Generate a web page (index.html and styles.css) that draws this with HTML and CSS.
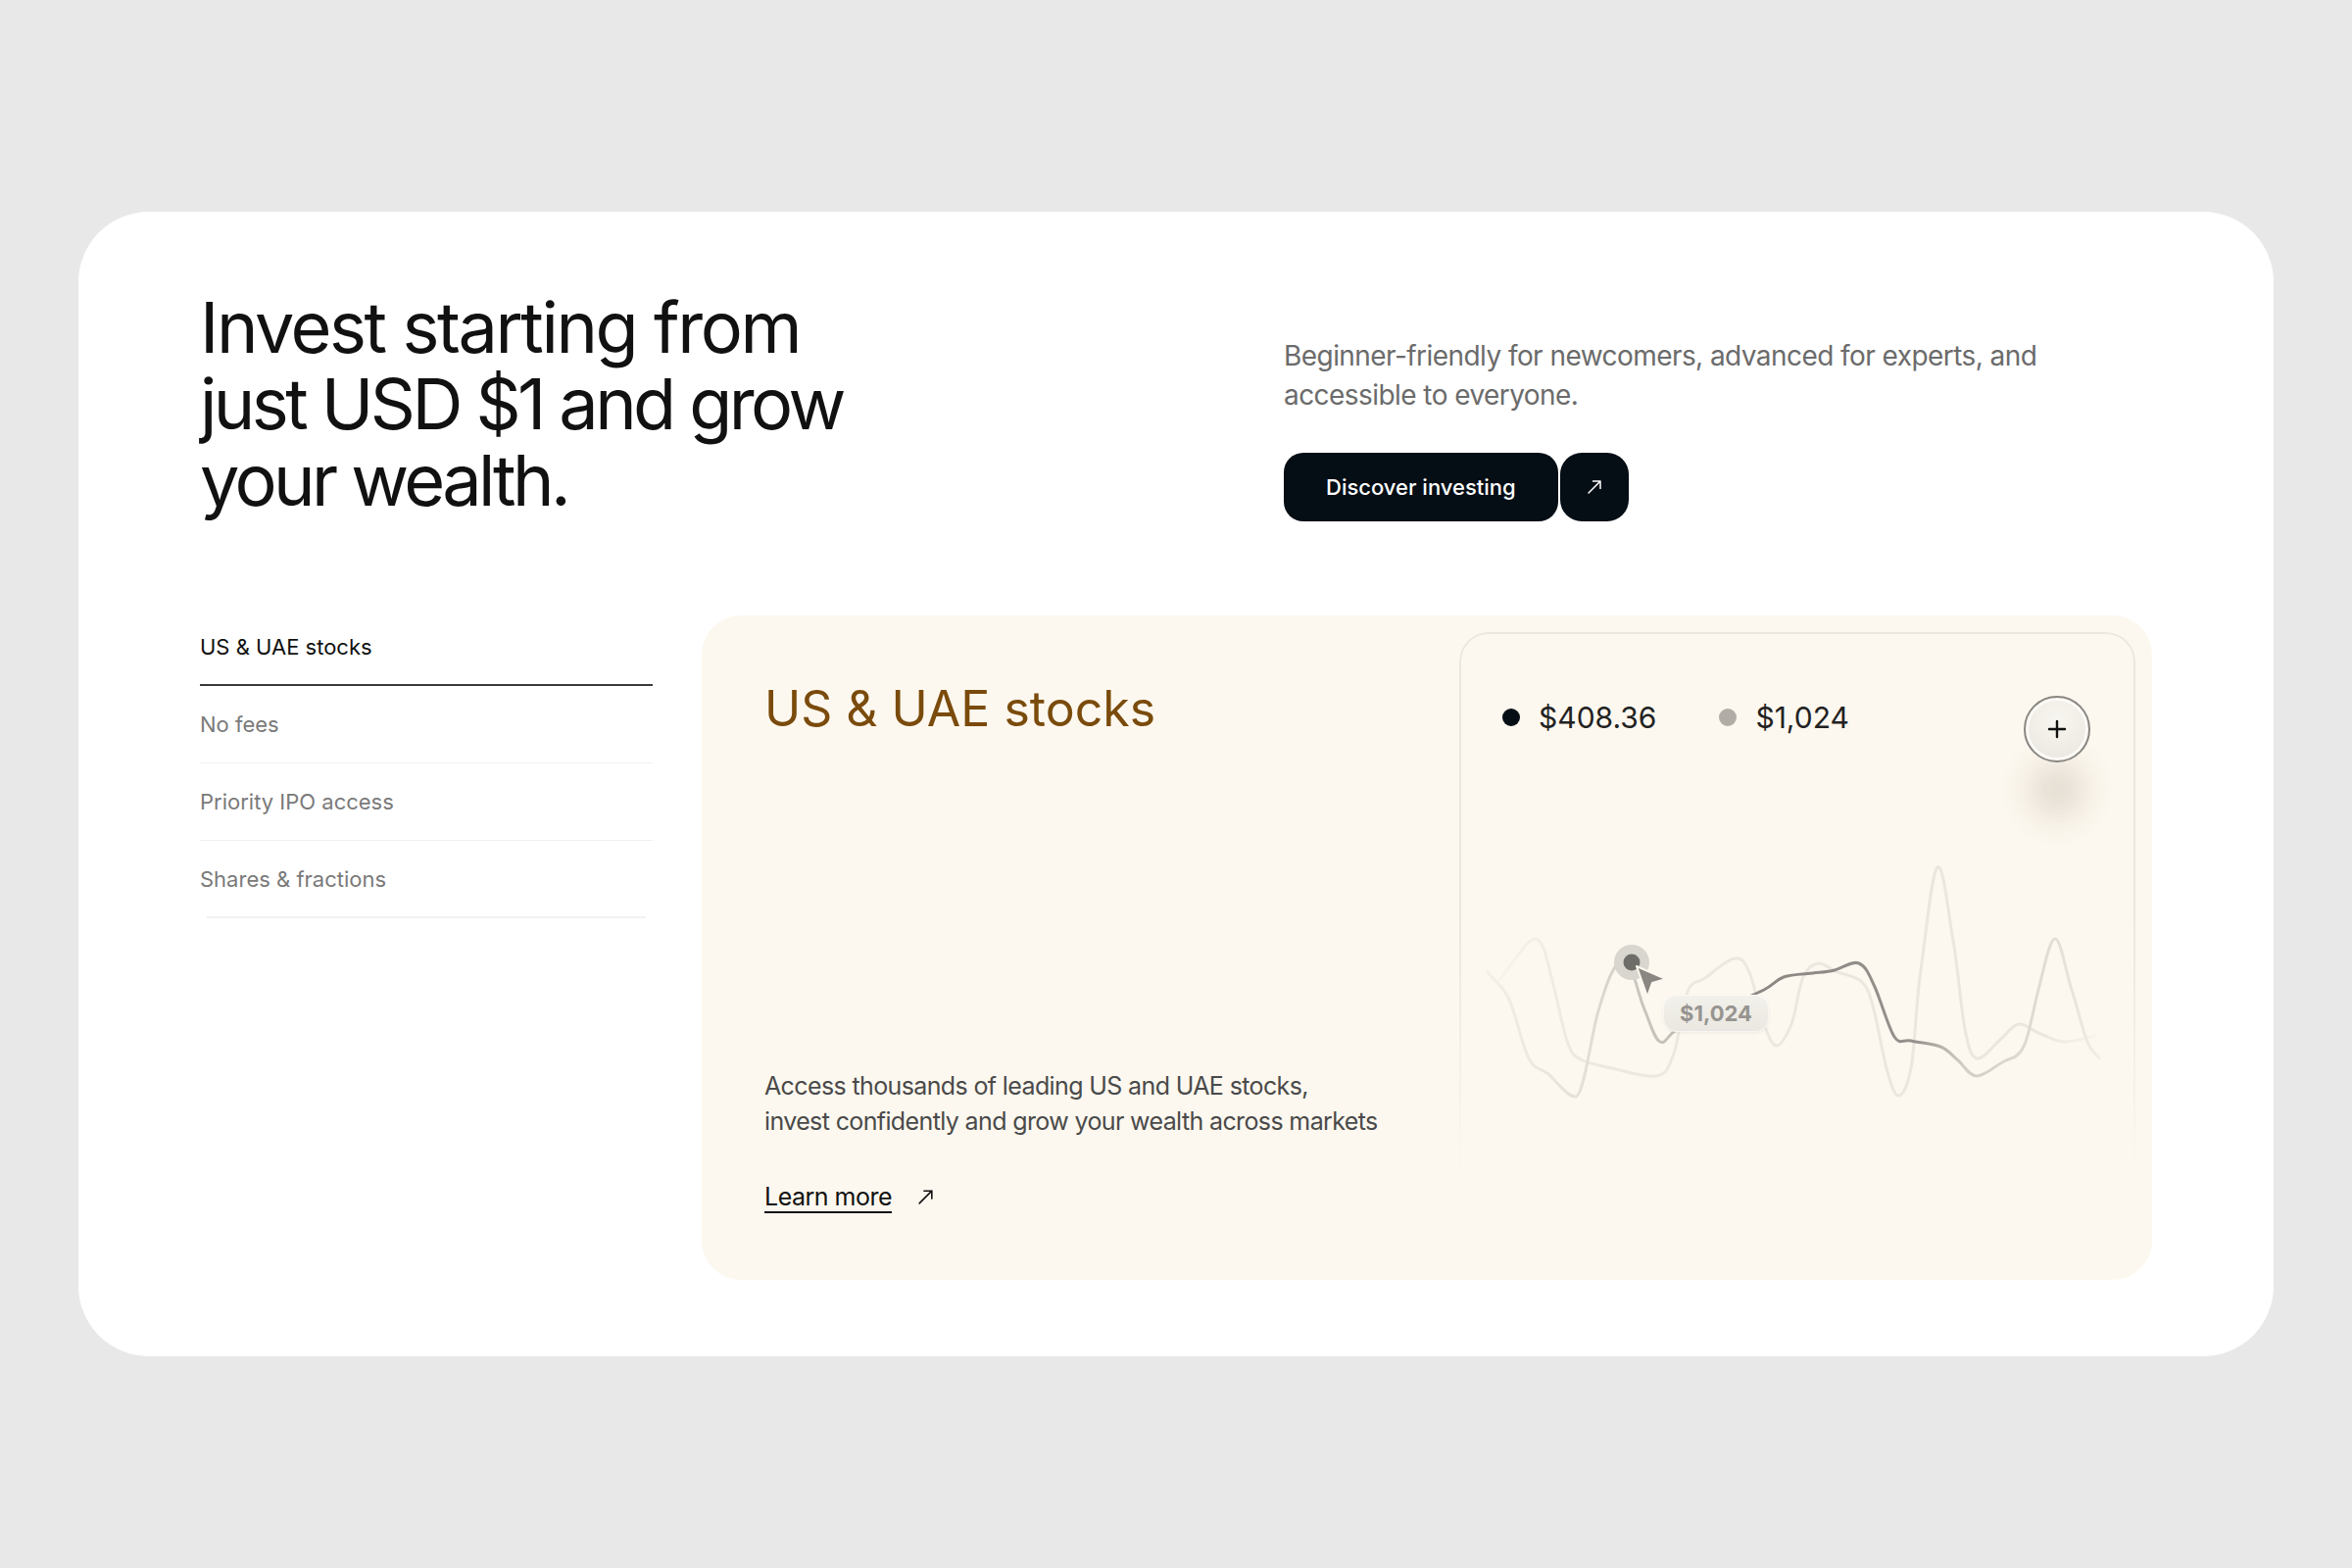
FILE: index.html
```html
<!DOCTYPE html>
<html lang="en">
<head>
<meta charset="utf-8">
<title>Invest</title>
<link rel="stylesheet" href="styles.css">
</head>
<body>
<main class="card">
  <section class="hero">
    <h1 class="hero-title"><span class="hero-line-wide">Invest starting from</span><br>just USD $1 and grow<br>your wealth.</h1>
    <div class="hero-side">
      <p class="hero-text">Beginner-friendly for newcomers, advanced for experts, and accessible to everyone.</p>
      <div class="cta">
        <a class="btn" href="#">Discover investing</a>
        <a class="btn-icon" href="#" aria-label="Open">
          <svg width="18" height="18" viewBox="0 0 18 18" fill="none" stroke="#fff" stroke-width="1.5" stroke-linecap="round" stroke-linejoin="round"><path d="M3 15 L15 3 M7.5 3 H15 V10.5"/></svg>
        </a>
      </div>
    </div>
  </section>

  <section class="features">
    <ul class="tabs">
      <li class="tab tab-active">US &amp; UAE stocks</li>
      <li class="tab">No fees</li>
      <li class="tab">Priority IPO access</li>
      <li class="tab tab-last">Shares &amp; fractions</li>
    </ul>

    <div class="panel">
      <div class="panel-text">
        <h2 class="panel-title">US &amp; UAE stocks</h2>
        <div class="panel-bottom">
          <p class="panel-desc">Access thousands of leading US and UAE stocks,<br>invest confidently and grow your wealth across markets</p>
          <a class="learn" href="#"><span class="learn-label">Learn more</span>
            <svg width="19" height="19" viewBox="0 0 18 18" fill="none" stroke="#111" stroke-width="1.5" stroke-linecap="round" stroke-linejoin="round"><path d="M3 15 L15 3 M7.5 3 H15 V10.5"/></svg>
          </a>
        </div>
      </div>

      <div class="chart-card">
        <div class="chart-head">
          <div class="legend">
            <div class="legend-item"><span class="dot dot-dark"></span>$408.36</div>
            <div class="legend-item"><span class="dot dot-light"></span>$1,024</div>
          </div>
          <button class="plus" type="button" aria-label="Add">
            <svg width="20" height="20" viewBox="0 0 20 20" fill="none" stroke="#111" stroke-width="2.4" stroke-linecap="round"><path d="M10 2 V18 M2 10 H18"/></svg>
          </button>
        </div>
        <svg class="chart" width="690" height="645" viewBox="1489 645 690 645">
          <defs>
            <linearGradient id="g1" gradientUnits="userSpaceOnUse" x1="1518" y1="0" x2="2142" y2="0">
              <stop offset="0" stop-color="#f4efe6"/>
              <stop offset="0.16" stop-color="#e4e0d8"/>
              <stop offset="0.24" stop-color="#cac7c0"/>
              <stop offset="0.30" stop-color="#c3c0ba"/>
              <stop offset="0.45" stop-color="#8b8884"/>
              <stop offset="0.70" stop-color="#95928d"/>
              <stop offset="0.78" stop-color="#d3cfc8"/>
              <stop offset="0.93" stop-color="#e3ded6"/>
              <stop offset="1" stop-color="#f2ede4"/>
            </linearGradient>
            <linearGradient id="g2" gradientUnits="userSpaceOnUse" x1="1530" y1="0" x2="2138" y2="0">
              <stop offset="0" stop-color="#f9f4eb"/>
              <stop offset="0.12" stop-color="#eee9e0"/>
              <stop offset="0.9" stop-color="#ebe6dd"/>
              <stop offset="1" stop-color="#f8f3ea"/>
            </linearGradient>
          </defs>
          <path fill="none" stroke="url(#g2)" stroke-width="3" stroke-linecap="round"
            d="M1530 1000 C1542 986 1558 957 1567 958 S1580 987 1585 1005 S1595 1052 1600 1065 S1607 1078 1615 1082 S1632 1087 1645 1090 S1679 1100 1690 1098 S1703 1089 1708 1075 S1717 1025 1722 1012 S1732 1004 1740 998 S1762 979 1770 978 S1780 981 1785 992 S1795 1032 1800 1045 S1808 1067 1813 1067 S1823 1057 1828 1045 S1835 1007 1840 997 S1849 984 1855 983 S1867 989 1875 992 S1894 996 1900 1002 S1908 1015 1912 1030 S1921 1075 1925 1090 S1933 1118 1937 1118 S1946 1111 1950 1090 S1955 1024 1960 990 S1971 890 1977 885 S1988 932 1993 960 S2001 1030 2005 1050 S2011 1078 2017 1080 S2033 1068 2040 1062 S2053 1046 2060 1045 S2072 1051 2080 1054 S2095 1062 2105 1063 S2127 1059 2138 1057"/>
          <path fill="none" stroke="url(#g1)" stroke-width="3" stroke-linecap="round"
            d="M1518 992 C1525 1001 1533 1005 1540 1020 S1553 1067 1560 1080 S1572 1089 1580 1096 S1600 1120 1608 1119 S1624 1056 1630 1035 S1640 1001 1645 992 S1654 974 1660 980 S1672 1016 1678 1030 S1688 1060 1694 1063 S1701 1056 1712 1050 S1745 1035 1760 1028 S1790 1015 1800 1010 S1812 1000 1820 997 S1841 994 1850 993 S1864 992 1872 990 S1890 980 1897 983 S1907 994 1913 1007 S1927 1049 1933 1058 S1942 1060 1950 1062 S1972 1065 1980 1068 S1992 1077 1998 1082 S2009 1098 2017 1098 S2037 1087 2045 1083 S2059 1080 2065 1068 S2075 1028 2080 1010 S2091 958 2097 958 S2108 992 2114 1010 S2125 1051 2130 1063 S2138 1074 2142 1080"/>
          <circle cx="1665" cy="982" r="18" fill="#d9d6cf"/>
          <circle cx="1665" cy="982" r="8.5" fill="#6e6d6a"/>
          <polygon points="1670,986 1700,999 1686,1003 1681,1017" fill="#8a8783" stroke="#fdf8ef" stroke-width="2" stroke-linejoin="round"/>
        </svg>
        <div class="tooltip">$1,024</div>
      </div>
    </div>
  </section>
</main>
</body>
</html>
```

FILE: styles.css
```css
* {
  box-sizing: border-box;
}

html,
body {
  margin: 0;
}

body {
  background: #e8e8e8;
  font-family: Inter, "Noto Sans", "Liberation Sans", sans-serif;
  color: #111;
}

.card {
  margin: 216px 80px 0;
  background: #fff;
  border-radius: 72px;
  padding: 79px 124px 78px;
}

/* hero */
.hero {
  display: grid;
  grid-template-columns: 1106px 1fr;
}

.hero-title {
  margin: 0;
  font-size: 72px;
  line-height: 78px;
  font-weight: 400;
  letter-spacing: -0.05em;
  color: #111;
}

.hero-line-wide {
  letter-spacing: -0.034em;
}

.hero-side {
  margin-top: 48px;
}

.hero-text {
  margin: 0;
  max-width: 780px;
  font-size: 28px;
  line-height: 40px;
  letter-spacing: -0.02em;
  color: #6b6b6b;
}

.cta {
  display: flex;
  gap: 2px;
  margin-top: 39px;
}

.btn {
  display: flex;
  align-items: center;
  height: 70px;
  padding: 0 43px;
  border-radius: 20px;
  background: #050d15;
  color: #fff;
  font-size: 22px;
  font-weight: 500;
  text-decoration: none;
}

.btn-icon {
  display: flex;
  align-items: center;
  justify-content: center;
  width: 70px;
  height: 70px;
  border-radius: 22px;
  background: #050d15;
}

/* features */
.features {
  display: grid;
  grid-template-columns: 462px 1fr;
  gap: 50px;
  margin-top: 89px;
}

.tabs {
  list-style: none;
  margin: 0;
  padding: 0;
}

.tab {
  height: 79px;
  display: flex;
  align-items: center;
  font-size: 22px;
  color: #7a7a7a;
  border-bottom: 1px solid #f1f1f1;
}

.tab-active {
  color: #111;
  border-bottom: 2px solid #3a3a3a;
}

.tab-last {
  border-bottom: 2px solid transparent;
  border-image: linear-gradient(to right, transparent 8px, #f2f2f2 8px, #f2f2f2 calc(100% - 8px), transparent calc(100% - 8px)) 1;
}

.panel {
  margin-top: 7px;
  height: 678px;
  background: #fdf8ef;
  border-radius: 40px;
  display: grid;
  grid-template-columns: 1fr 690px;
  padding-right: 17px;
}

.panel-text {
  display: flex;
  flex-direction: column;
  padding: 65px 64px 69px;
}

.panel-title {
  margin: 0;
  font-size: 50px;
  line-height: 60px;
  font-weight: 400;
  color: #7a4b0c;
}

.panel-bottom {
  margin-top: auto;
}

.panel-desc {
  margin: 0;
  font-size: 25px;
  line-height: 36px;
  letter-spacing: -0.025em;
  color: #4a4a4a;
}

.learn {
  display: inline-flex;
  align-items: center;
  gap: 25px;
  margin-top: 43px;
  font-size: 25px;
  line-height: 32px;
  letter-spacing: -0.02em;
  color: #111;
  text-decoration: none;
}

.learn-label {
  text-decoration: underline;
  text-decoration-thickness: 2px;
  text-underline-offset: 6px;
}

/* chart card */
.chart-card {
  position: relative;
  margin: 17px 0 16px;
  border-radius: 30px;
}

.chart-card::before {
  content: "";
  position: absolute;
  inset: 0;
  border: 2px solid #ece6dc;
  border-radius: 30px;
  -webkit-mask-image: linear-gradient(to bottom, #000 45%, transparent 86%);
  mask-image: linear-gradient(to bottom, #000 45%, transparent 86%);
}

.chart-head {
  position: relative;
  z-index: 2;
  display: flex;
  justify-content: space-between;
  align-items: flex-start;
  padding: 65px 46px 0 44px;
}

.legend {
  display: flex;
  gap: 64px;
  margin-top: 4px;
}

.legend-item {
  display: flex;
  align-items: center;
  gap: 19px;
  font-size: 30px;
  line-height: 36px;
  color: #222;
}

.dot {
  width: 18px;
  height: 18px;
  border-radius: 50%;
}

.dot-dark {
  background: #050d15;
}

.dot-light {
  background: #b1ada6;
}

.plus {
  width: 68px;
  height: 68px;
  padding: 0;
  border-radius: 50%;
  border: 2.5px solid #8a8782;
  background: radial-gradient(circle at 50% 35%, #f8f6f0 0%, #efece5 60%, #e4e1da 100%);
  box-shadow: inset 0 0 0 3px #fbfaf6, 0 62px 32px -4px rgba(80, 66, 40, 0.14);
  display: flex;
  align-items: center;
  justify-content: center;
}

.chart {
  position: absolute;
  left: 0;
  top: 0;
  z-index: 1;
}

.tooltip {
  position: absolute;
  z-index: 3;
  left: 208px;
  top: 370px;
  width: 108px;
  height: 38px;
  border-radius: 14px;
  background: linear-gradient(to bottom, #f3f1eb, #e9e7e0);
  box-shadow: 0 1px 3px rgba(0, 0, 0, 0.06), inset 0 0 0 1px rgba(255, 255, 255, 0.6);
  font-size: 22px;
  line-height: 38px;
  font-weight: 700;
  text-align: center;
  color: #979490;
}
```
